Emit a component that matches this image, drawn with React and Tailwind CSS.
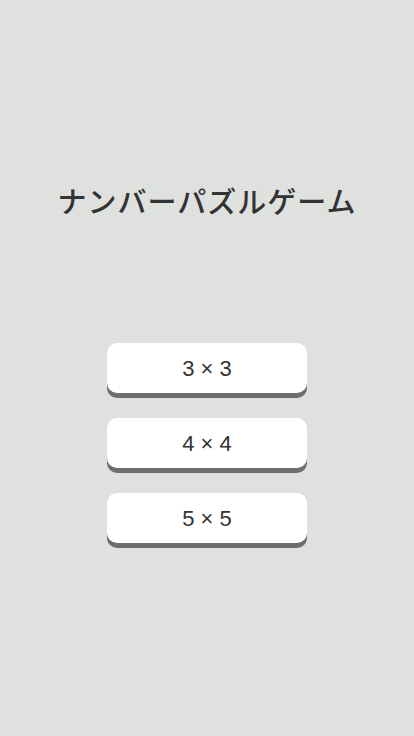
export default function App() {
  const sizes = [3, 4, 5];
  return (
    <div className="min-h-[736px] w-full bg-[#dfe1de] flex flex-col items-center pt-[180px]">
      <h1
        className="text-[29px] leading-[40px] text-[#333333] font-medium tracking-[1px]"
        style={{ fontFamily: '"Noto Sans CJK JP", "Noto Sans", sans-serif' }}
      >
        ナンバーパズルゲーム
      </h1>
      <div className="mt-[123px] flex flex-col gap-[25px]">
        {sizes.map((n) => (
          <button
            key={n}
            className="w-[200px] h-[50px] rounded-[10px] bg-white text-[#333333] text-[22px] shadow-[0_5px_0_#6e6e6e] flex items-center justify-center"
            style={{ fontFamily: '"Liberation Sans", Arial, sans-serif' }}
          >
            {n} × {n}
          </button>
        ))}
      </div>
    </div>
  );
}
